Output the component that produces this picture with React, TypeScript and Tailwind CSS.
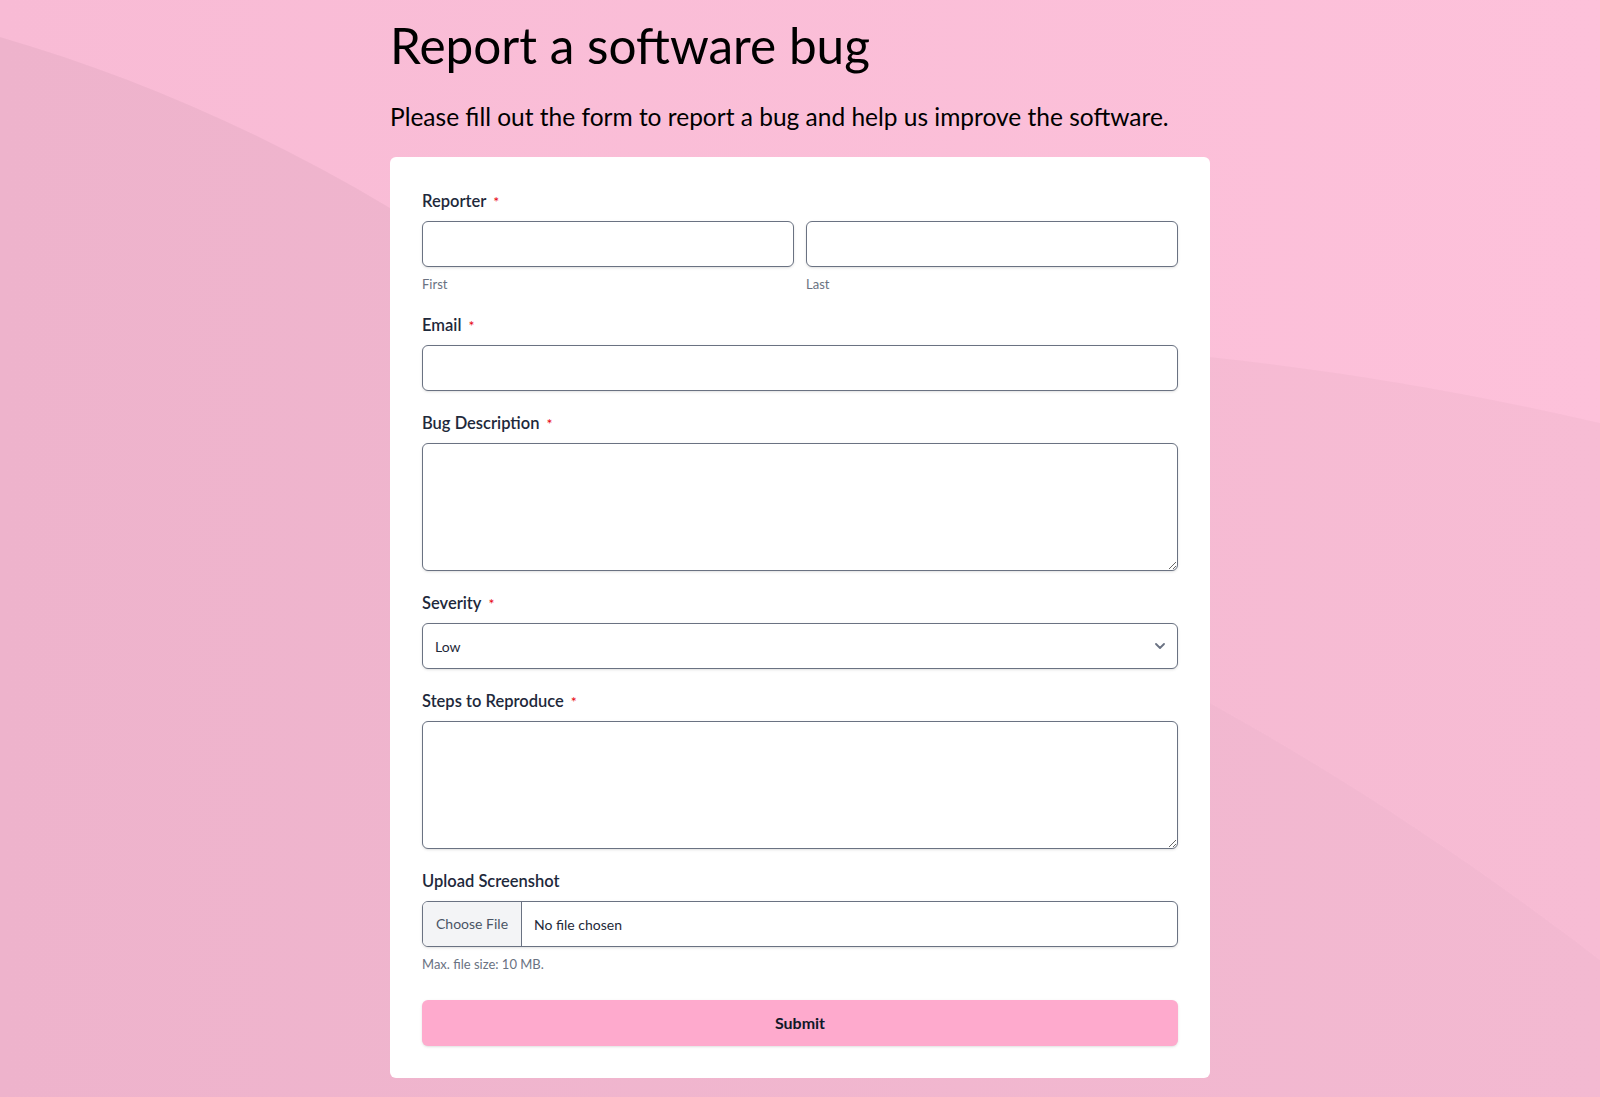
import { useState } from 'react';

// Little red star after required labels
const Required = () => <span className="ml-[7px] text-sm font-normal text-red-600">*</span>;

interface FieldLabelProps {
  text: string;
  required?: boolean;
  htmlFor?: string;
}

const FieldLabel = ({ text, required, htmlFor }: FieldLabelProps) => (
  <label htmlFor={htmlFor} className="block text-[16.5px] leading-6 font-semibold text-[#1e293b]">
    {text}
    {required && <Required />}
  </label>
);

const inputCls =
  'block h-[46px] w-full rounded-md border border-gray-500 bg-white px-3 text-sm text-gray-800 shadow-sm outline-none focus:border-pink-400';

const textareaCls =
  'mt-2 block h-32 w-full rounded-md border border-gray-500 bg-white px-3 py-2 text-sm text-gray-800 shadow-sm outline-none focus:border-pink-400';

const Caption = ({ children }: { children: React.ReactNode }) => (
  <p className="mt-2 text-[13px] leading-[18px] text-gray-500">{children}</p>
);

// soft pink waves behind everything
const Background = () => (
  <svg
    className="absolute inset-0 h-full w-full"
    viewBox="0 0 1600 1097"
    preserveAspectRatio="none"
    aria-hidden="true"
  >
    <defs>
      <linearGradient id="base" x1="0" y1="0" x2="1" y2="0">
        <stop offset="0" stopColor="#f8bbd5" />
        <stop offset="1" stopColor="#fdc1da" />
      </linearGradient>
    </defs>
    <rect width="1600" height="1097" fill="url(#base)" />
    {/* big diagonal wave */}
    <path
      d="M0,37 C130,75 260,130 390,208 C650,370 950,540 1210,703 C1340,775 1470,860 1600,960 L1600,1097 L0,1097 Z"
      fill="#000"
      fillOpacity="0.038"
    />
    {/* band on the right */}
    <path
      d="M900,330 C1000,340 1100,345 1210,357 C1350,372 1480,395 1600,423 L1600,960 C1470,860 1340,775 1210,703 C1100,640 1000,560 900,500 Z"
      fill="#000"
      fillOpacity="0.025"
    />
  </svg>
);

export default function App() {
  const [severity, setSeverity] = useState('Low');

  return (
    <div className="relative min-h-screen overflow-hidden font-['Lato',sans-serif] text-black">
      <Background />

      <div className="relative mx-auto w-[820px] pt-[21px] pb-[18px]">
        <h1 className="text-[49.5px] leading-none font-normal text-black">Report a software bug</h1>
        <p className="mt-[28px] text-[24.5px] leading-9 text-black">
          Please fill out the form to report a bug and help us improve the software.
        </p>

        <form
          className="mt-[22px] rounded-md bg-white p-8"
          onSubmit={(e) => e.preventDefault()}
        >
          <div className="space-y-5">
            {/* Reporter */}
            <div>
              <FieldLabel text="Reporter" required />
              <div className="mt-2 grid grid-cols-2 gap-3">
                <div>
                  <input type="text" className={inputCls} />
                  <Caption>First</Caption>
                </div>
                <div>
                  <input type="text" className={inputCls} />
                  <Caption>Last</Caption>
                </div>
              </div>
            </div>

            {/* Email */}
            <div>
              <FieldLabel text="Email" required htmlFor="email" />
              <input id="email" type="email" className={'mt-2 ' + inputCls} />
            </div>

            {/* Bug description */}
            <div>
              <FieldLabel text="Bug Description" required htmlFor="desc" />
              <textarea id="desc" className={textareaCls} />
            </div>

            {/* Severity */}
            <div>
              <FieldLabel text="Severity" required htmlFor="severity" />
              <div className="relative mt-2">
                <select
                  id="severity"
                  value={severity}
                  onChange={(e) => setSeverity(e.target.value)}
                  className={inputCls + ' appearance-none pt-[2px] pr-10'}
                >
                  <option>Low</option>
                  <option>Medium</option>
                  <option>High</option>
                  <option>Critical</option>
                </select>
                <svg
                  className="pointer-events-none absolute right-[13px] top-1/2 h-[6px] w-[10px] -translate-y-1/2 text-gray-500"
                  viewBox="0 0 10 6"
                  fill="none"
                >
                  <path d="M1 1l4 4 4-4" stroke="currentColor" strokeWidth="1.8" strokeLinecap="round" strokeLinejoin="round" />
                </svg>
              </div>
            </div>

            {/* Steps */}
            <div>
              <FieldLabel text="Steps to Reproduce" required htmlFor="steps" />
              <textarea id="steps" className={textareaCls} />
            </div>

            {/* Upload */}
            <div>
              <FieldLabel text="Upload Screenshot" />
              <label className="mt-2 flex h-[46px] w-full cursor-pointer items-stretch overflow-hidden rounded-md border border-gray-500 bg-white shadow-sm">
                <span className="flex items-center border-r border-gray-500 bg-gray-100 px-[13px] text-sm text-gray-600">
                  Choose File
                </span>
                <span className="flex items-center pt-[2px] pl-3 text-sm text-gray-800">No file chosen</span>
                <input type="file" className="hidden" />
              </label>
              <Caption>Max. file size: 10 MB.</Caption>
            </div>
          </div>

          <button
            type="submit"
            className="mt-[27px] flex h-[46px] w-full items-center justify-center rounded-md bg-[#feaacd] text-base font-bold text-gray-900 shadow-sm"
          >
            Submit
          </button>
        </form>
      </div>
    </div>
  );
}
